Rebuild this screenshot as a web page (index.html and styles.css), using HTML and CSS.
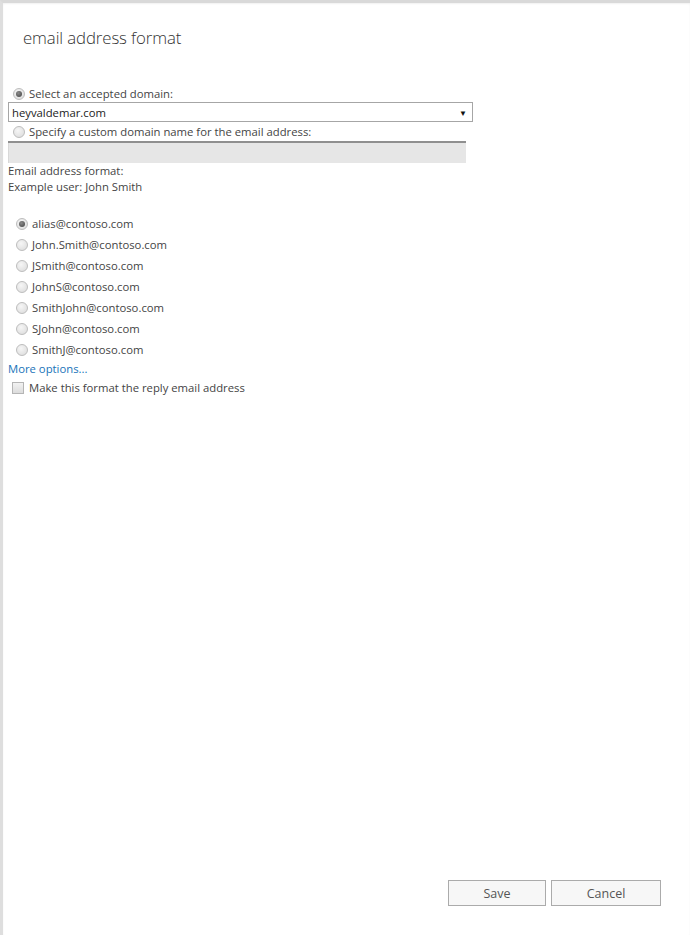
FILE: index.html
```html
<!DOCTYPE html>
<html lang="en">
<head>
<meta charset="utf-8">
<title>email address format</title>
<link rel="stylesheet" href="styles.css">
</head>
<body>
<div class="panel">
  <h1 class="title">email address format</h1>

  <label class="row row-domain">
    <span class="radio checked"></span>
    <span class="label">Select an accepted domain:</span>
  </label>
  <div class="select">
    <span class="select-value">heyvaldemar.com</span>
    <span class="select-arrow">&#9660;</span>
  </div>

  <label class="row row-custom">
    <span class="radio"></span>
    <span class="label">Specify a custom domain name for the email address:</span>
  </label>
  <div class="input-disabled"></div>

  <div class="info">
    <div>Email address format:</div>
    <div>Example user: John Smith</div>
  </div>

  <ul class="formats">
    <li class="fmt"><span class="radio checked"></span><span>alias@contoso.com</span></li>
    <li class="fmt"><span class="radio"></span><span>John.Smith@contoso.com</span></li>
    <li class="fmt"><span class="radio"></span><span>JSmith@contoso.com</span></li>
    <li class="fmt"><span class="radio"></span><span>JohnS@contoso.com</span></li>
    <li class="fmt"><span class="radio"></span><span>SmithJohn@contoso.com</span></li>
    <li class="fmt"><span class="radio"></span><span>SJohn@contoso.com</span></li>
    <li class="fmt"><span class="radio"></span><span>SmithJ@contoso.com</span></li>
  </ul>

  <a class="more" href="#">More options...</a>

  <label class="row row-check">
    <span class="checkbox"></span>
    <span class="label">Make this format the reply email address</span>
  </label>

  <div class="buttons">
    <button class="btn btn-save">Save</button>
    <button class="btn btn-cancel">Cancel</button>
  </div>
</div>
</body>
</html>
```
FILE: styles.css
```css
* { box-sizing: border-box; }
html, body {
  margin: 0;
  padding: 0;
  background: #ffffff;
}
body {
  font-family: "Segoe UI", "Open Sans", "Noto Sans", Arial, sans-serif;
  font-size: 11.3px;
  color: #444444;
}
.panel {
  width: 690px;
  height: 935px;
  border-top: 3px solid #d9d9d9;
  border-left: 3px solid #dedede;
  padding: 0 29px 29px 5px;
  display: flex;
  flex-direction: column;
  align-items: flex-start;
  box-shadow: inset 0 1px 2px rgba(0,0,0,0.06);
}
.title {
  margin: 23px 0 0 15px;
  font-family: "Segoe UI Light", "Open Sans", sans-serif;
  font-weight: 300;
  font-size: 16.8px;
  line-height: 24px;
  color: #333333;
  letter-spacing: -0.1px;
}
.row {
  display: flex;
  align-items: center;
  height: 16px;
  line-height: 16px;
  cursor: default;
}
.row-domain { margin-top: 36px; padding-left: 5px; }
.row-custom { margin-top: 2px; padding-left: 5px; }
.row-check { margin-top: 3px; padding-left: 4px; }
.row .label { margin-left: 4px; }
.row-check .label { margin-left: 5px; }

.radio {
  width: 12px;
  height: 12px;
  border-radius: 50%;
  border: 1px solid #bdbdbd;
  background: radial-gradient(circle at 40% 35%, #f6f6f6 0%, #e2e2e2 70%, #d4d4d4 100%);
  display: inline-flex;
  align-items: center;
  justify-content: center;
  flex-shrink: 0;
}
.radio.checked::after {
  content: "";
  width: 6px;
  height: 6px;
  border-radius: 50%;
  background: radial-gradient(circle at 40% 35%, #8a8a8a 0%, #505050 80%);
}
.checkbox {
  width: 12px;
  height: 12px;
  border: 1px solid #b5b5b5;
  background: linear-gradient(#f2f2f2, #dcdcdc);
  flex-shrink: 0;
}
.select {
  margin-top: 0;
  width: 465px;
  height: 20px;
  border: 1px solid #a6a6a6;
  background: #ffffff;
  display: flex;
  align-items: center;
  justify-content: space-between;
  padding: 0 5px 0 3px;
  color: #222222;
}
.select-value { font-size: 11.3px; }
.select-arrow { font-size: 8px; color: #111111; }
.input-disabled {
  margin-top: 1px;
  width: 458px;
  height: 22px;
  background: #e6e6e6;
  border-top: 2px solid #8f8f8f;
  box-shadow: inset 1px 0 0 #d8d8d8;
}
.info {
  line-height: 16px;
}
.formats {
  list-style: none;
  margin: 18px 0 0 0;
  padding: 0 0 0 8px;
}
.fmt {
  display: flex;
  align-items: center;
  height: 21px;
  gap: 4px;
}
.more {
  display: block;
  margin-top: 1px;
  line-height: 16px;
  color: #1873b9;
  text-decoration: none;
}
.buttons {
  margin-top: auto;
  align-self: flex-end;
  display: flex;
  gap: 5px;
}
.btn {
  height: 26px;
  border: 1px solid #ababab;
  background: #f7f7f7;
  font-family: "Segoe UI", "Open Sans", "Noto Sans", Arial, sans-serif;
  font-size: 12.5px;
  color: #555555;
  padding: 0;
}
.btn-save { width: 98px; }
.btn-cancel { width: 110px; }
```
